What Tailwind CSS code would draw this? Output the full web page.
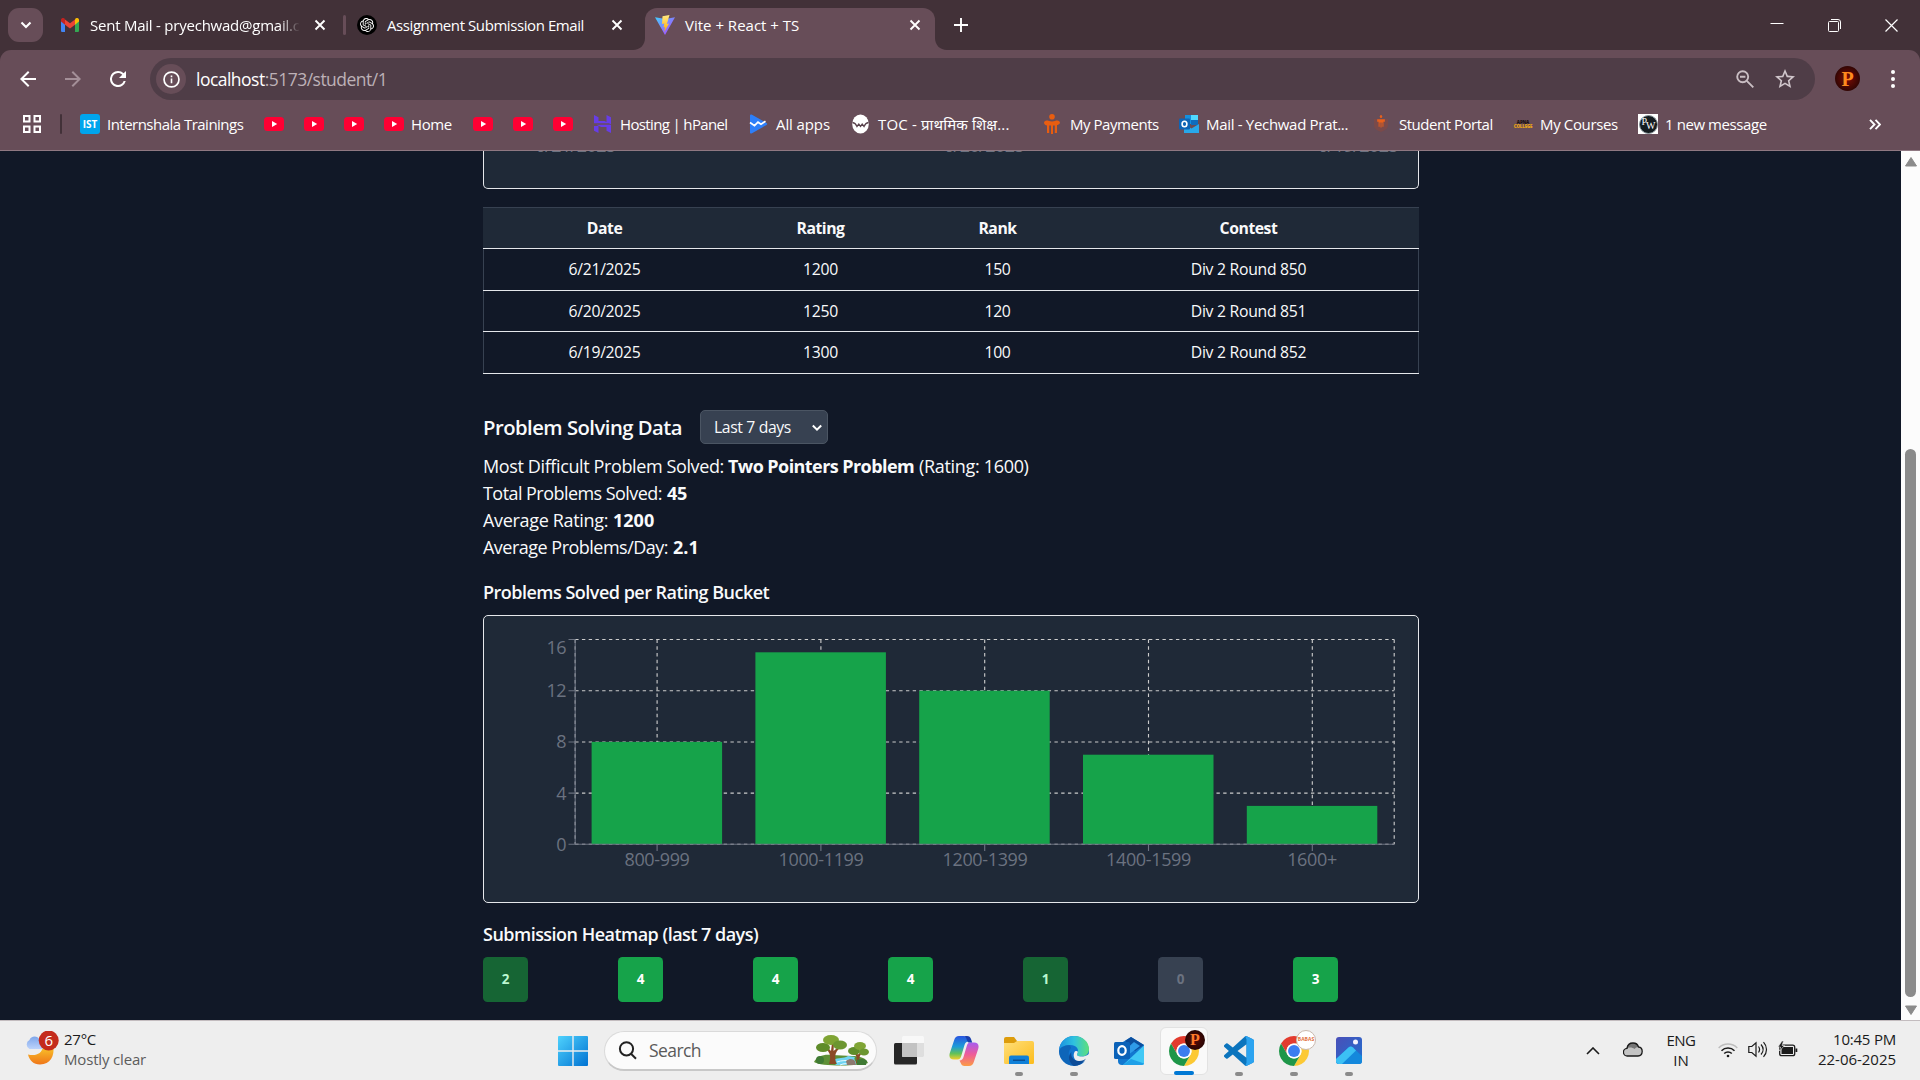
<!DOCTYPE html>
<html lang="en">
<head>
<meta charset="utf-8">
<title>Vite + React + TS</title>
<script src="https://cdn.jsdelivr.net/npm/@tailwindcss/browser@4"></script>
</head>
<body class="h-[1080px] w-[1920px] overflow-hidden bg-[#111827] font-['Open_Sans','Noto_Sans',sans-serif] text-[15px] text-white">
<svg class="absolute h-0 w-0">
  <defs>
    <linearGradient id="gVite" x1="0" y1="0" x2="1" y2="1"><stop offset="0" stop-color="#41d1ff"/><stop offset="1" stop-color="#bd34fe"/></linearGradient>
    <linearGradient id="gBolt" x1="0" y1="0" x2="0" y2="1"><stop offset="0" stop-color="#ffea83"/><stop offset="1" stop-color="#ffa800"/></linearGradient>
    <linearGradient id="gWin" x1="0" y1="0" x2="1" y2="1"><stop offset="0" stop-color="#4fd2fd"/><stop offset="1" stop-color="#0072d2"/></linearGradient>
    <linearGradient id="gMoon" x1="0" y1="0" x2="0" y2="1"><stop offset="0" stop-color="#f9c62b"/><stop offset="1" stop-color="#ef7619"/></linearGradient>
    <linearGradient id="gCloud" x1="0" y1="0" x2="0" y2="1"><stop offset="0" stop-color="#7ea6ea"/><stop offset="1" stop-color="#bcd3fb"/></linearGradient>
    <linearGradient id="gCopA" x1="0" y1="0" x2="0" y2="1"><stop offset="0" stop-color="#2a55e0"/><stop offset=".45" stop-color="#1d9bd8"/><stop offset=".75" stop-color="#63c258"/><stop offset="1" stop-color="#f3cf2c"/></linearGradient>
    <linearGradient id="gCopB" x1="0" y1="0" x2="0" y2="1"><stop offset="0" stop-color="#a65cf0"/><stop offset=".5" stop-color="#ee5b9a"/><stop offset="1" stop-color="#fb9b45"/></linearGradient>
    <linearGradient id="gFold" x1="0" y1="0" x2="1" y2="1"><stop offset="0" stop-color="#ffdf7a"/><stop offset="1" stop-color="#fcbc1c"/></linearGradient>
    <linearGradient id="gEdge" x1="0" y1="0" x2="1" y2="0"><stop offset="0" stop-color="#1a8fe0"/><stop offset=".5" stop-color="#2fc2df"/><stop offset="1" stop-color="#5fe07a"/></linearGradient>
    <linearGradient id="gPhoto" x1="0" y1="0" x2="1" y2="1"><stop offset="0" stop-color="#4a4fb8"/><stop offset="1" stop-color="#1f6fd0"/></linearGradient>
    <symbol id="yt" viewBox="0 0 20 14"><rect width="20" height="14" rx="3.500" fill="#ff0033"/><path d="M8 4v6l5.200-3z" fill="#fff"/></symbol>
    <symbol id="x" viewBox="0 0 12 12"><path d="M1.500 1.500l9 9M10.500 1.500l-9 9" stroke="#fff" stroke-width="1.900" fill="none"/></symbol>
    <symbol id="chrome" viewBox="0 0 48 48"><path d="M3.220 12A24 24 0 0 1 44.780 12H24A12 12 0 0 0 13.600 30z" fill="#e33b2e"/><path d="M44.780 12A24 24 0 0 1 24 48L34.400 30A12 12 0 0 0 24 12z" fill="#fcc934"/><path d="M24 48A24 24 0 0 1 3.220 12L13.600 30A12 12 0 0 0 34.400 30z" fill="#1e9648"/><circle cx="24" cy="24" r="12" fill="#fff"/><circle cx="24" cy="24" r="9.500" fill="#3b7df0"/></symbol>
    <symbol id="trident" viewBox="0 0 20 20"><circle cx="9" cy="2.800" r="2.800"/><path d="M1 9c0-2 2-3 5-2 1.500.6 4.500.6 6 0 3-1 5 0 5 2-1 1.500-2 2-3 2V19h-2.200v-7.500H10V20H8v-8.500H6.200V19H4v-7.500C2.500 11.500 1.500 10.500 1 9z"/></symbol>
  </defs>
</svg>

<div class="flex h-full flex-col">
  <!-- Tab strip -->
  <header class="flex h-[50px] shrink-0 items-end bg-[#423138]">
    <div class="flex h-[50px] items-center pl-2">
      <button class="flex h-[34px] w-[35px] items-center justify-center rounded-[11px] bg-[#674d58]">
        <svg class="size-3" viewBox="0 0 12 12"><path d="M1.500 3.500l4.500 4.500 4.500-4.500" fill="none" stroke="#fff" stroke-width="2.100"/></svg>
      </button>
      <svg class="ml-[18px] h-[14px] w-[18px]" viewBox="0 0 18 14"><path d="M0 2v10.700C0 13.400.6 14 1.300 14H4V6L2 1z" fill="#4285f4"/><path d="M14 6v8h2.700c.7 0 1.300-.6 1.300-1.300V2l-2-1z" fill="#34a853"/><path d="M14 1.600V6.700L18 3.600V2c0-2-2.200-2.600-3.500-1.500z" fill="#fbbc04"/><path d="M4 6.700V1.500l5 3.800 5-3.800v5.200L9 10.500z" fill="#ea4335"/><path d="M0 2v1.600L4 6.700V1.500L3.500.5C2.200-.6 0 0 0 2z" fill="#c5221f"/></svg>
      <span class="ml-[11px] w-[210px] overflow-hidden whitespace-nowrap tracking-[-0.23px] [mask-image:linear-gradient(to_right,black_90%,transparent)]">Sent Mail - pryechwad@gmail.com</span>
      <svg class="ml-[14px] size-3"><use href="#x"/></svg>
      <span class="ml-[17px] h-5 w-[3px] rounded-full bg-[#674d58]"></span>
      <span class="ml-[11px] flex size-5 items-center justify-center rounded-full bg-black">
        <svg class="size-[14px]" viewBox="0 0 24 24"><path fill="#fff" d="M22.282 9.821a5.985 5.985 0 0 0-.516-4.910 6.046 6.046 0 0 0-6.510-2.900A6.065 6.065 0 0 0 4.981 4.182a5.985 5.985 0 0 0-3.998 2.900 6.046 6.046 0 0 0 .743 7.097 5.980 5.980 0 0 0 .511 4.911 6.051 6.051 0 0 0 6.515 2.900A5.985 5.985 0 0 0 13.260 24a6.056 6.056 0 0 0 5.772-4.206 5.989 5.989 0 0 0 3.998-2.900 6.056 6.056 0 0 0-.748-7.073zm-9.022 12.608a4.476 4.476 0 0 1-2.876-1.041l.142-.080 4.778-2.758a.795.795 0 0 0 .393-.681v-6.737l2.020 1.169a.071.071 0 0 1 .038.052v5.583a4.504 4.504 0 0 1-4.495 4.494zm-9.661-4.125a4.471 4.471 0 0 1-.535-3.014l.142.085 4.783 2.758a.771.771 0 0 0 .781 0l5.843-3.369v2.332a.080.080 0 0 1-.033.062L9.740 19.950a4.499 4.499 0 0 1-6.141-1.646zM2.341 7.896a4.485 4.485 0 0 1 2.366-1.973V11.600a.766.766 0 0 0 .388.677l5.814 3.354-2.020 1.169a.076.076 0 0 1-.071 0l-4.830-2.787A4.504 4.504 0 0 1 2.341 7.896zm16.596 3.856L13.104 8.364 15.119 7.200a.076.076 0 0 1 .071 0l4.830 2.791a4.494 4.494 0 0 1-.677 8.104v-5.677a.790.790 0 0 0-.407-.667zm2.011-3.023l-.142-.085-4.774-2.782a.776.776 0 0 0-.785 0L9.409 9.230V6.897a.066.066 0 0 1 .028-.062l4.830-2.787a4.499 4.499 0 0 1 6.680 4.660zM8.307 12.863l-2.020-1.164a.080.080 0 0 1-.038-.057V6.074a4.499 4.499 0 0 1 7.376-3.454l-.142.081L8.704 5.459a.795.795 0 0 0-.393.681zm1.098-2.365l2.602-1.500 2.607 1.500v2.999l-2.597 1.500-2.607-1.500z"/></svg>
      </span>
      <span class="ml-[10px] w-[197px] whitespace-nowrap tracking-[-0.42px]">Assignment Submission Email</span>
      <svg class="ml-[27px] size-3"><use href="#x"/></svg>
    </div>
    <svg class="ml-[10px] h-3 w-3 shrink-0" viewBox="0 0 12 12"><path d="M12 0v12H0C7 12 12 7 12 0z" fill="#674d58"/></svg>
    <div class="flex h-[42px] w-[290px] shrink-0 items-center rounded-t-[12px] bg-[#674d58] pb-2 pl-[10px]">
      <svg class="size-5" viewBox="0 0 20 20"><path d="M0 2.200L10 20 20 2.200 10.500 4z" fill="url(#gVite)"/><path d="M14.500 0L7.500 1.300 7 9l2.300-.4-.8 4 1.600-.5-1 5 5-8.600-2.200.5z" fill="url(#gBolt)"/></svg>
      <span class="ml-[10px] w-[120px] whitespace-nowrap">Vite + React + TS</span>
      <svg class="ml-[104px] size-3"><use href="#x"/></svg>
    </div>
    <svg class="h-3 w-3 shrink-0" viewBox="0 0 12 12"><path d="M0 0v12h12C5 12 0 7 0 0z" fill="#674d58"/></svg>
    <div class="flex h-[50px] flex-1 items-center pl-[7px] pr-[22px]">
      <svg class="size-[14px]" viewBox="0 0 14 14"><path d="M7 0v14M0 7h14" stroke="#fff" stroke-width="1.900"/></svg>
      <div class="ml-auto flex items-center gap-[44px]">
        <svg class="h-3 w-[14px]" viewBox="0 0 14 12"><path d="M.5 4.500h13" stroke="#fff"/></svg>
        <svg class="size-[13px]" viewBox="0 0 13 13"><path d="M.5 3.500a1 1 0 0 1 1-1h8a1 1 0 0 1 1 1v8a1 1 0 0 1-1 1h-8a1 1 0 0 1-1-1zM3 .5h7a2.500 2.500 0 0 1 2.500 2.500v7" fill="none" stroke="#fff"/></svg>
        <svg class="size-[13px]" viewBox="0 0 13 13"><path d="M.5.5l12 12M12.500.5l-12 12" stroke="#fff" stroke-width="1.200"/></svg>
      </div>
    </div>
  </header>

  <!-- Address row and bookmarks -->
  <div class="h-[101px] shrink-0 bg-[#423138]">
    <div class="flex h-full flex-col rounded-t-[11px] border-b border-[#8f7882] bg-[#674d58]">
      <div class="flex h-[57px] items-center pl-[20px] pr-[19px]">
        <svg class="size-4" viewBox="4 4 16 16"><path d="M20 11H7.830l5.590-5.590L12 4l-8 8 8 8 1.410-1.410L7.830 13H20z" fill="#fff"/></svg>
        <svg class="ml-[29px] size-4" viewBox="4 4 16 16"><path d="M12 4l-1.410 1.410L16.170 11H4v2h12.170l-5.580 5.590L12 20l8-8z" fill="#a48f98"/></svg>
        <svg class="ml-[29px] size-4" viewBox="4 4 16 16"><path d="M17.650 6.350A7.950 7.950 0 0 0 12 4a8 8 0 1 0 7.730 10h-2.080A6 6 0 1 1 12 6c1.660 0 3.140.69 4.220 1.780L13 11h7V4z" fill="#fff"/></svg>
        <div class="ml-[24px] mt-px flex h-[42px] w-[1665px] shrink-0 items-center rounded-full bg-[#4f3d47] pl-[6px] pr-[20px]">
          <span class="flex size-[30px] items-center justify-center rounded-full bg-[#674d58]"><svg class="size-[17px]" viewBox="0 0 18 18"><circle cx="9" cy="9" r="7.900" fill="none" stroke="#fff" stroke-width="1.800"/><path d="M9 8v5M9 4.800v1.700" stroke="#fff" stroke-width="1.700"/></svg></span>
          <span class="ml-[10px] text-[17.5px] tracking-[-0.52px] text-[#bdb1b7]"><span class="text-white">localhost</span>:5173/student/1</span>
          <svg class="ml-auto size-[18px]" viewBox="0 0 18 18" fill="none" stroke="#c9bec3" stroke-width="1.900"><circle cx="6.700" cy="6.700" r="5.500"/><path d="M10.800 10.800l6.500 6.500M4 6.700h5.400"/></svg>
          <svg class="ml-[21px] size-[20px]" viewBox="2 2 20 20"><path d="M22 9.240l-7.190-.62L12 2 9.190 8.630 2 9.240l5.460 4.730L5.820 21 12 17.270 18.180 21l-1.630-7.030zM12 15.400l-3.760 2.270 1-4.280-3.320-2.880 4.380-.38L12 6.100l1.710 4.040 4.380.38-3.320 2.880 1 4.280z" fill="#d0c6cb"/></svg>
        </div>
        <span class="ml-[20px] flex size-[25px] items-center justify-center rounded-full bg-[radial-gradient(circle,#7d0d06,#120202)] font-['Liberation_Serif',serif] text-[20px] font-bold leading-none text-[#ff8a1e]">P</span>
        <svg class="ml-auto h-[18px] w-4" viewBox="0 0 16 18" fill="#fff"><circle cx="8" cy="2" r="2"/><circle cx="8" cy="9" r="2"/><circle cx="8" cy="16" r="2"/></svg>
      </div>
      <div class="flex h-[34px] items-center whitespace-nowrap pl-[23px]">
        <svg class="size-[18px]" viewBox="0 0 18 18" fill="none" stroke="#fff" stroke-width="2"><path d="M1 1h5.500v5.500H1zM11.500 1H17v5.500h-5.500zM1 11.500h5.500V17H1zM11.500 11.500H17V17h-5.500z"/></svg>
        <span class="ml-[19px] mr-[18px] h-5 w-[2px] rounded bg-[#423138]"></span>
        <div class="flex w-[184px] items-center gap-[7px]"><span class="flex size-5 items-center justify-center rounded-[3px] bg-[#00a5ec] text-[10px] font-bold">IST</span><span class="tracking-[-0.52px]">Internshala Trainings</span></div>
        <svg class="mr-5 h-[14px] w-5"><use href="#yt"/></svg><svg class="mr-5 h-[14px] w-5"><use href="#yt"/></svg><svg class="mr-5 h-[14px] w-5"><use href="#yt"/></svg>
        <div class="flex w-[89px] items-center gap-[7px]"><svg class="h-[14px] w-5"><use href="#yt"/></svg><span class="tracking-[-0.4px]">Home</span></div>
        <svg class="mr-5 h-[14px] w-5"><use href="#yt"/></svg><svg class="mr-5 h-[14px] w-5"><use href="#yt"/></svg><svg class="mr-5 h-[14px] w-5"><use href="#yt"/></svg>
        <div class="flex w-[156px] items-center gap-[7px]"><svg class="size-5" viewBox="0 0 20 20" fill="#673de6"><path d="M1 1l4.500 2.300V7h6L16 9.200H1zM13.500 1L18 3.300v7L13.500 8zM1 12l4.500 0V19L1 16.700zM3.500 10.800H18V19l-4.500-2.300V13H8z"/></svg><span class="tracking-[-0.64px]">Hosting | hPanel</span></div>
        <div class="flex w-[102px] items-center gap-[7px]"><svg class="size-5" viewBox="0 0 20 20"><path d="M1 1.500C1 .5 2 .2 3 .8L17.500 9c1 .6 1 1.400 0 2L3 19.200c-1 .6-2 .3-2-.7z" fill="#2d7ff9"/><path d="M1 8.500l4.500 3.200L9 8.200l3 2 4.500-3" fill="none" stroke="#fff" stroke-width="1.700"/></svg><span class="tracking-[-0.1px]">All apps</span></div>
        <div class="flex w-[192px] items-center gap-[7px]"><svg class="size-5" viewBox="0 0 20 20"><ellipse cx="9.500" cy="10" rx="8.300" ry="9.500" fill="#fff"/><path d="M1.500 8.500c2 .3 3.500 1.700 4.500 4l1.800-2.400 1.700 2.400 1.700-2.400 1.800 2.400c1-2.300 2.500-3.700 4.500-4" fill="none" stroke="#5a434d" stroke-width="1.300"/></svg><span class="tracking-[0.16px]">TOC - प्राथमिक शिक्ष...</span></div>
        <div class="flex w-[136px] items-center gap-[7px]"><svg class="size-5" fill="#e85d10"><use href="#trident"/></svg><span class="tracking-[-0.46px]">My Payments</span></div>
        <div class="flex w-[193px] items-center gap-[7px]"><svg class="size-5" viewBox="0 0 20 20"><path d="M6 1h13v9H6z" fill="#1490df"/><path d="M12 1h7v5h-7z" fill="#50d9ff"/><path d="M12 6h7v5h-7z" fill="#0f6cbd"/><path d="M5 10l7.500 4.500L20 10v9H5z" fill="#28a8ea"/><rect y="4.500" width="11" height="11" rx="1" fill="#0f64b5"/><ellipse cx="5.500" cy="10" rx="2.400" ry="2.700" fill="none" stroke="#fff" stroke-width="1.600"/></svg><span class="tracking-[-0.31px]">Mail - Yechwad Prat...</span></div>
        <div class="flex w-[141px] items-center gap-[7px]"><svg class="size-5" viewBox="0 0 20 20"><path d="M2 5h14v6c0 4-3 5-7 7-4-2-7-3-7-7z" fill="#7a4a4a"/><g fill="#e8601c" transform="translate(4.700 1) scale(.48 .62)"><circle cx="9" cy="2.500" r="2.500"/><path d="M1 7h16v4h-3v8h-2v-7h-2v8H8v-8H6v7H4v-8H1z"/></g></svg><span class="tracking-[-0.48px]">Student Portal</span></div>
        <div class="flex w-[125px] items-center gap-[7px]"><span class="flex w-5 flex-col items-center text-[4.5px] font-extrabold leading-[4px] tracking-[-0.2px] text-[#1c1213]"><span>APNA</span><span class="text-[#e8a317]">COLLEGE</span></span><span class="tracking-[-0.36px]">My Courses</span></div>
        <div class="flex items-center gap-[7px]"><span class="flex h-5 w-5 items-center justify-center bg-white"><span class="flex size-[19px] items-center justify-center rounded-full border border-[#8a979c] bg-[#141c20] font-['Liberation_Serif',serif] text-[10px] leading-none tracking-[-1px]"><span class="pb-1">P</span><span class="pt-1">W</span></span></span><span class="tracking-[-0.42px]">1 new message</span></div>
        <svg class="ml-auto mr-[39px] h-[11px] w-3" viewBox="0 0 12 11" fill="none" stroke="#fff" stroke-width="1.900"><path d="M1 .8l4.500 4.700L1 10.200M6.500.8L11 5.500l-4.500 4.700"/></svg>
      </div>
    </div>
  </div>

  <!-- Page viewport -->
  <div class="flex h-[869px] shrink-0 overflow-hidden">
    <main class="flex flex-1 flex-col pl-[483px] text-[#f9fafb]">
      <div class="h-[38px] w-[936px] shrink-0 rounded-b-[5px] border border-t-0 border-[#e5e7eb] bg-[#1f2937]">
        <svg class="block h-[37px] w-[934px]" viewBox="484 151 934 37"><g fill="#6b7280" font-size="18" text-anchor="middle" letter-spacing="-.55"><text x="575.500" y="152.300">6/21/2025</text><text x="984" y="152.300">6/20/2025</text><text x="1358" y="152.300">6/19/2025</text></g></svg>
      </div>

      <div class="mt-[18px] w-[936px] border-x border-t border-[#374151] text-[15.75px] tracking-[-0.28px]">
        <div class="-mx-px grid h-[41px] grid-cols-[243px_189px_165px_337px] items-center border-b border-[#e5e7eb] bg-[#1f2937] pt-[2px] text-center font-bold tracking-[-0.45px]"><span>Date</span><span>Rating</span><span>Rank</span><span>Contest</span></div>
        <div class="-mx-px grid h-[42px] grid-cols-[243px_189px_165px_337px] items-center border-b border-[#e5e7eb] pt-px text-center"><span>6/21/2025</span><span>1200</span><span>150</span><span>Div 2 Round 850</span></div>
        <div class="-mx-px grid h-[41px] grid-cols-[243px_189px_165px_337px] items-center border-b border-[#e5e7eb] pt-[2px] text-center"><span>6/20/2025</span><span>1250</span><span>120</span><span>Div 2 Round 851</span></div>
        <div class="-mx-px grid h-[42px] grid-cols-[243px_189px_165px_337px] items-center border-b border-[#e5e7eb] pt-px text-center"><span>6/19/2025</span><span>1300</span><span>100</span><span>Div 2 Round 852</span></div>
      </div>

      <div class="mt-[36px] flex h-[34px] items-center">
        <h2 class="w-[217px] text-[20.25px] font-semibold tracking-[-0.52px]">Problem Solving Data</h2>
        <div class="flex h-[34px] w-[128px] items-center justify-between rounded-[5px] border border-[#4b5563] bg-[#374151] pl-[13px] pr-[5px] pt-px text-[15.75px] tracking-[-0.37px]">Last 7 days
          <svg class="h-[8px] w-[10px]" viewBox="0 0 10 8"><path d="M.8 1.500L5 5.700l4.200-4.200" fill="none" stroke="#fff" stroke-width="2"/></svg>
        </div>
      </div>

      <div class="mt-[9px] whitespace-nowrap text-[18px] leading-[27px]">
        <p class="flex h-[27px]"><span class="w-[245px] tracking-[-0.38px]">Most Difficult Problem Solved:</span><b class="w-[191px] tracking-[-0.57px]">Two Pointers Problem</b><span class="tracking-[-0.32px]">(Rating: 1600)</span></p>
        <p class="flex h-[27px]"><span class="w-[184px] tracking-[-0.55px]">Total Problems Solved:</span><b class="tracking-[-0.2px]">45</b></p>
        <p class="flex h-[27px]"><span class="w-[130px] tracking-[-0.33px]">Average Rating:</span><b>1200</b></p>
        <p class="flex h-[27px]"><span class="w-[190px] tracking-[-0.51px]">Average Problems/Day:</span><b>2.1</b></p>
      </div>

      <h3 class="mt-[18px] text-[18px] font-semibold leading-[27px] tracking-[-0.51px]">Problems Solved per Rating Bucket</h3>
      <div class="mt-[9px] h-[288px] w-[936px] shrink-0 rounded-[5px] border border-[#e5e7eb] bg-[#1f2937]">
        <svg class="block h-[286px] w-[934px]" viewBox="484 616 934 286">
          <g stroke="#ccc" stroke-width="1.125" stroke-dasharray="3.375 3.375" fill="none">
            <path d="M575.200 639.500H1394.200M575.200 690.700H1394.200M575.200 742H1394.200M575.200 793.100H1394.200M575.200 844.200H1394.200"/>
            <path d="M657.100 639.500V844.200M820.900 639.500V844.200M984.700 639.500V844.200M1148.500 639.500V844.200M1312.300 639.500V844.200M575.200 639.500V844.200M1394.200 639.500V844.200"/>
          </g>
          <g fill="#16a34a">
            <rect x="591.600" y="741.900" width="130.500" height="102.300"/>
            <rect x="755.400" y="652.300" width="130.500" height="191.900"/>
            <rect x="919.200" y="690.700" width="130.500" height="153.500"/>
            <rect x="1083" y="754.700" width="130.500" height="89.500"/>
            <rect x="1246.800" y="805.900" width="130.500" height="38.300"/>
          </g>
          <path d="M575.200 639.500V844.200M568.500 844.200H1394.200M568.500 793.100h6.700M568.500 742h6.700M568.500 690.700h6.700M568.500 639.500h6.700M657.100 844.200v6.700M820.900 844.200v6.700M984.700 844.200v6.700M1148.500 844.200v6.700M1312.300 844.200v6.700" stroke="#6b7280" stroke-width="1.125" fill="none"/>
          <g fill="#6b7280" font-size="18" letter-spacing="-.35">
            <g text-anchor="end"><text x="566.300" y="654">16</text><text x="566.300" y="697">12</text><text x="566.300" y="748.300">8</text><text x="566.300" y="800">4</text><text x="566.300" y="851">0</text></g>
            <g text-anchor="middle"><text x="657" y="866">800-999</text><text x="821" y="866">1000-1199</text><text x="985" y="866">1200-1399</text><text x="1148.500" y="866">1400-1599</text><text x="1312" y="866">1600+</text></g>
          </g>
        </svg>
      </div>

      <h3 class="mt-[18px] text-[18px] font-semibold leading-[27px] tracking-[-0.52px]">Submission Heatmap (last 7 days)</h3>
      <div class="mt-[9px] grid w-[945px] shrink-0 grid-cols-7 text-[13.5px] font-bold text-white [&>span]:flex [&>span]:size-[45px] [&>span]:items-center [&>span]:justify-center [&>span]:rounded-[4.5px]">
        <span class="bg-[#166534] text-[#bbf7d0]">2</span>
        <span class="bg-[#16a34a]">4</span>
        <span class="bg-[#16a34a]">4</span>
        <span class="bg-[#16a34a]">4</span>
        <span class="bg-[#166534] text-[#bbf7d0]">1</span>
        <span class="bg-[#374151] text-[#6b7280]">0</span>
        <span class="bg-[#16a34a]">3</span>
      </div>
    </main>
    <div class="flex w-[19px] flex-col items-center bg-[#fcfcfc]">
      <svg class="mt-[6px] h-[10px] w-3" viewBox="0 0 12 10"><path d="M6 .5l5.500 8.500H.5z" fill="#8b8b8b" stroke="#8b8b8b" stroke-linejoin="round"/></svg>
      <div class="mt-[282px] h-[548px] w-[11px] rounded-full bg-[#8b8b8b]"></div>
      <svg class="mt-[8px] h-[10px] w-3" viewBox="0 0 12 10"><path d="M6 9.500L.5 1h11z" fill="#8b8b8b" stroke="#8b8b8b" stroke-linejoin="round"/></svg>
    </div>
  </div>

  <!-- Taskbar -->
  <footer class="flex h-[60px] shrink-0 items-center border-t border-[#c3bcbf] bg-[#eeeeee] pr-6 text-[#1b1b1b]">
    <div class="flex w-[558px] items-center pl-6">
      <svg class="h-[40px] w-[36px]" viewBox="24 1028 36 40"><path d="M28 1051.500c8 2 14-1 15-8h10.300c1.500 9-3 18-13.300 18-6.500 0-10.500-4-12-10z" fill="url(#gMoon)"/><path d="M29.500 1046a5 5 0 0 1 0-9c1-4 8-5 10-.5 4 0 6 2.500 5.500 5.500-.5 3-2 4-4 4z" fill="url(#gCloud)"/><circle cx="48.700" cy="1037.500" r="10" fill="#c42b1c"/><text x="48.700" y="1043" text-anchor="middle" font-size="15" fill="#fff">6</text></svg>
      <div class="ml-1 flex flex-col pb-[4px] leading-5"><span class="tracking-[-0.26px]">27°C</span><span class="tracking-[-0.17px] text-[#5c5c5c]">Mostly clear</span></div>
    </div>
    <svg class="size-[30px]" viewBox="0 0 30 30"><path d="M0 1a1 1 0 0 1 1-1h13.300v14.300H0zM15.700 0H29a1 1 0 0 1 1 1v13.300H15.700zM0 15.700h14.300V30H1a1 1 0 0 1-1-1zM15.700 15.700H30V29a1 1 0 0 1-1 1H15.700z" fill="url(#gWin)"/></svg>
    <div class="ml-4 flex h-[40px] w-[273px] items-center rounded-full border border-b-2 border-[#dadada] border-b-[#c8c8c8] bg-[#fbfbfb] pl-[13px] pr-[7px]">
      <svg class="size-[19px]" viewBox="0 0 19 19" fill="none" stroke="#222" stroke-width="2"><circle cx="8.500" cy="7.800" r="6.600"/><path d="M13 12.800l5 5"/></svg>
      <span class="ml-[12px] text-[17.5px] tracking-[-0.57px] text-[#5a5a5a]">Search</span>
      <svg class="ml-auto h-[31px] w-[56px]" viewBox="0 0 56 31"><path d="M1 27c3-6 10-8 18-7l20 1c8 0 14 2 16 7-6 3-48 4-54-1z" fill="#5d8f36"/><path d="M20 25c6-3 10-1 15-4l7 1c-2 3 2 4 1 8H22c4-2 0-3-2-5z" fill="#6fd4f2"/><path d="M24 27c5-2 9-1 13-2M27 30c4-2 8-1 11-2" stroke="#e6fbff" fill="none"/><path d="M16 29c2-7 2-11-4-16l2-1 4 4 1-8h2l-.5 8 5-4 1 1.500c-5 4-5 9-3 15.500zM43 28c1-5 1-7-2-10l1.500-.5 2.500 2 3-2.500 1 1c-3 3-3 6-2 10z" fill="#8b4a26"/><ellipse cx="10" cy="12.500" rx="7" ry="4.500" fill="#5f8c2a"/><ellipse cx="18" cy="5" rx="8" ry="5" fill="#7fa434"/><ellipse cx="27" cy="10" rx="7" ry="4.500" fill="#6c9630"/><ellipse cx="41" cy="16" rx="6" ry="4" fill="#5f8c2a"/><ellipse cx="47" cy="11" rx="6" ry="4" fill="#7fa434"/><ellipse cx="51" cy="17" rx="5" ry="3.500" fill="#6c9630"/><circle cx="7" cy="25" r="4" fill="#3f7a34"/><path d="M33 26c4-3 7-2 9 0l1 4h-9z" fill="#8d7a70"/><path d="M44 25c4-2 8-1 10 1l-1 4H44z" fill="#3f7a34"/></svg>
    </div>

    <div class="ml-[4px] flex items-center [&>div]:relative [&>div]:flex [&>div]:h-[48px] [&>div]:w-[55px] [&>div]:items-center [&>div]:justify-center">
      <div><svg class="size-[30px]" viewBox="0 0 30 30"><rect y="7" width="23" height="21.500" rx="1.500" fill="#262626"/><rect x="8" y="0" width="22" height="21" rx="1.500" fill="#f8f8f8"/><path d="M8 7h15v14H9.500A1.500 1.500 0 0 1 8 19.500z" fill="#c2c2c2"/><path d="M23 7h7v12.500a1.500 1.500 0 0 1-1.500 1.500H23z" fill="#dedede"/></svg></div>
      <div><svg class="size-[30px]" viewBox="0 0 30 30"><path d="M19.500 5.500L18.300 3C17.600 1 16.500 0 14.500 0H10C7.500 0 6 1.500 5.200 4L1 16.500C-.5 21 1 23.500 5 23.500h3.500c2 0 3-1 3.600-3L15.500 9c.7-2.300 1.800-3.500 4-3.500z" fill="url(#gCopA)"/><path d="M10.500 24.500l1.200 2.500c.7 2 1.800 3 3.800 3H20c2.500 0 4-1.500 4.800-4L29 13.500c1.500-4.500 0-7-4-7h-3.500c-2 0-3 1-3.600 3L14.500 21c-.7 2.300-1.800 3.500-4 3.500z" fill="url(#gCopB)"/><path d="M14.500 0H18c2.300 0 3.300 1 4 3l1.200 3.500h-3c-1 0-1.500-.3-1.800-1.200L17.300 2.500C16.800 1 16 0 14.500 0z" fill="#1b3fae"/></svg></div>
      <div><svg class="h-[28px] w-[30px]" viewBox="0 0 30 28"><path d="M0 2a2 2 0 0 1 2-2h8l3 4h14v8H0z" fill="#dd9c0b"/><path d="M0 6h10l3-2h15a2 2 0 0 1 2 2v19.500a1.500 1.500 0 0 1-1.500 1.500h-27A1.500 1.500 0 0 1 0 25.500z" fill="url(#gFold)"/><path d="M5 20.500a2 2 0 0 1 2-2h16a2 2 0 0 1 2 2V27H5z" fill="#1080d8"/><rect x="9" y="22.500" width="12" height="1.500" fill="#0a4f94"/></svg><i class="absolute bottom-[-1px] h-1 w-2 rounded-full bg-[#8a8a8a]"></i></div>
      <div><svg class="size-[30px]" viewBox="0 0 30 30"><circle cx="15" cy="15" r="15" fill="#1174cf"/><path d="M0 14C1 5 7.500 0 15 0c9 0 15 6 15 13 0 4.500-3 7.500-7.500 7.500-4 0-5.500-1.500-4-3.500C20.500 13 17 9 11.500 9 6 9 1.500 11 0 14z" fill="url(#gEdge)"/><path d="M12 12c-4 4-3 13 5 17.500C8 31 1 24 0 16c0-4 5-7 11-7-1 0 1 2 1 3z" fill="#0c59a8" fill-opacity=".55"/><path d="M18.500 17c-1.500 2.500.5 3.500 4 3.500 2 0 5-.5 7.500-2.500v4l-3 3c-2 1-3 1.500-5.500 1-5 0-8.500-5-6-10 1-2 4.500-1 3 1z" fill="#eee"/><path d="M12.500 16c-1.500 5 3 9.500 8 9 3 0 5-1 6.500-2.500C24.500 27 20 30 15 30c-5-3-7-10-2.500-14z" fill="#0d4c98"/></svg><i class="absolute bottom-[-1px] h-1 w-2 rounded-full bg-[#8a8a8a]"></i></div>
      <div><svg class="h-[28px] w-[30px]" viewBox="0 0 30 28"><path d="M4 8L17 0l13 8v18a2 2 0 0 1-2 2H8a4 4 0 0 1-4-4z" fill="#1277cf"/><path d="M17 0l13 8-9 6-10-10z" fill="#0c4f9e"/><path d="M10 14l10-9 6 4-12 9z" fill="#2f9be8"/><path d="M30 8.500V26a2 2 0 0 1-2 2H9z" fill="#41c8f5"/><path d="M9 28l8-6 13 4.500-2 1.500z" fill="#1fa0e8"/><rect y="5" width="16" height="17" rx="1.500" fill="#0b62b8"/><ellipse cx="8" cy="13.500" rx="3.700" ry="4.300" fill="none" stroke="#fff" stroke-width="2.200"/></svg></div>
      <div><span class="flex h-[48px] w-[48px] items-center justify-center rounded-md border border-[#e2e2e2] bg-[#f9f9f9]"><svg class="size-[30px]"><use href="#chrome"/></svg></span><span class="absolute right-[6px] top-[3px] flex size-[20px] items-center justify-center rounded-full bg-[radial-gradient(circle,#5d0c06,#120202)] font-['Liberation_Serif',serif] text-[16px] font-bold leading-none text-[#ff7a2a]">P</span><i class="absolute bottom-0 h-1 w-5 rounded-full bg-[#0078d4]"></i></div>
      <div><svg class="size-[30px]" viewBox="0 0 24 24"><path d="M23.150 2.587L18.210.21a1.494 1.494 0 0 0-1.705.29l-9.460 8.630-4.120-3.128a.999.999 0 0 0-1.276.057L.327 7.261A1 1 0 0 0 .326 8.740L3.899 12 .326 15.260a1 1 0 0 0 .001 1.479L1.650 17.940a.999.999 0 0 0 1.276.057l4.120-3.128 9.460 8.630a1.492 1.492 0 0 0 1.704.29l4.942-2.377A1.500 1.500 0 0 0 24 20.060V3.939a1.500 1.500 0 0 0-.850-1.352zm-5.146 14.861L10.826 12l7.178-5.448v10.896z" fill="#0b74bd"/><path d="M23.150 2.587L18.210.21A1.500 1.500 0 0 0 17 .2l1 2.500v18.600l-1 2.500c.4.100.8.100 1.210-.1l4.942-2.287A1.500 1.500 0 0 0 24 20.060V3.939a1.500 1.500 0 0 0-.850-1.352z" fill="#2ba3f0"/></svg><i class="absolute bottom-[-1px] h-1 w-2 rounded-full bg-[#8a8a8a]"></i></div>
      <div><svg class="size-[30px]"><use href="#chrome"/></svg><span class="absolute right-[5px] top-[3px] flex size-[20px] items-center justify-center rounded-full border border-[#c9b9ae] bg-white text-[5px] font-bold text-[#e2703a]">BABAS</span><i class="absolute bottom-[-1px] h-1 w-2 rounded-full bg-[#8a8a8a]"></i></div>
      <div><svg class="h-[27px] w-[26px]" viewBox="0 0 26 27"><rect width="26" height="27" rx="3" fill="url(#gPhoto)"/><path d="M0 22L12.500 10.500c1.500-1.300 3-1.300 4.500 0L26 19v5a3 3 0 0 1-3 3H3a3 3 0 0 1-3-3z" fill="#1488dc"/><path d="M0 22L12.500 10.500c1.500-1.300 3-1.300 4.500 0L20 13.500 6 27H3a3 3 0 0 1-3-3z" fill="#3cc0f4"/><circle cx="19.500" cy="5" r="2.500" fill="#f3f3ff"/></svg><i class="absolute bottom-[-1px] h-1 w-2 rounded-full bg-[#8a8a8a]"></i></div>
    </div>

    <div class="ml-auto flex items-center">
      <svg class="h-2 w-[14px]" viewBox="0 0 14 8"><path d="M1 7l6-6 6 6" fill="none" stroke="#1b1b1b" stroke-width="1.600"/></svg>
      <svg class="ml-[23px] mb-[3px] h-[15px] w-5" viewBox="0 0 20 15"><path d="M4.500 14a3.800 3.800 0 0 1-.5-7.600C4.500 3 7 1 10 1c3 0 4.800 1.500 5.500 4 5 .5 5 8.500-.5 9z" fill="#c4c4c4"/><path d="M3 6.800C4.500 3 7 1 10 1c3 0 4.800 1.500 5.500 4-2 0-3 .8-4 2-2.500-2-5.500-2-8.500-.2z" fill="#777"/><path d="M4.500 14a3.800 3.800 0 0 1-.5-7.600C4.500 3 7 1 10 1c3 0 4.800 1.500 5.500 4 5 .5 5 8.500-.5 9z" fill="none" stroke="#1b1b1b" stroke-width="1.300"/></svg>
      <div class="ml-[23px] flex w-[30px] flex-col items-center pb-[2px] leading-5"><span class="tracking-[-0.5px]">ENG</span><span>IN</span></div>
      <svg class="mb-[2px] ml-[22px] h-[16px] w-5" viewBox="0 0 20 16" fill="none" stroke="#1b1b1b" stroke-width="1.500"><path d="M.7 6a13 13 0 0 1 18.600 0" stroke="#bdbdbd"/><path d="M3.500 8.800a9.200 9.200 0 0 1 13 0M6.200 11.500a5.400 5.400 0 0 1 7.600 0"/><circle cx="10" cy="14" r="1.300" fill="#1b1b1b" stroke="none"/></svg>
      <svg class="mb-[2px] ml-[10px] h-[17px] w-5" viewBox="0 0 20 17" fill="none" stroke="#1b1b1b" stroke-width="1.200"><path d="M.8 5.500h3L8 1.800v13.400l-4.200-3.700h-3z"/><path d="M10.500 5.500c1.300 1.800 1.300 4.200 0 6M13 3.500c2.600 3 2.600 7 0 10M15.500 1.200c4 4.300 4 10.300 0 14.600"/></svg>
      <svg class="mb-[3px] ml-[10px] h-[16px] w-5" viewBox="0 0 20 16"><rect x="1.700" y="4.200" width="15" height="10.500" rx="2" fill="none" stroke="#1b1b1b" stroke-width="1.300"/><rect x="3.500" y="6" width="11.500" height="7" fill="#1b1b1b"/><path d="M17.500 7.500h1.800v3.500h-1.800z" fill="#1b1b1b"/><path d="M4 0L0 6h2.500L1.500 10 6.500 4.500H4L5.500 0z" fill="#1b1b1b" stroke="#eee" stroke-width=".6"/></svg>
      <div class="ml-[20px] flex w-[78px] flex-col items-end whitespace-nowrap pb-[4px] leading-5"><span class="tracking-[-0.21px]">10:45 PM</span><span class="tracking-[-0.03px]">22-06-2025</span></div>
    </div>
  </footer>
</div>
</body>
</html>
